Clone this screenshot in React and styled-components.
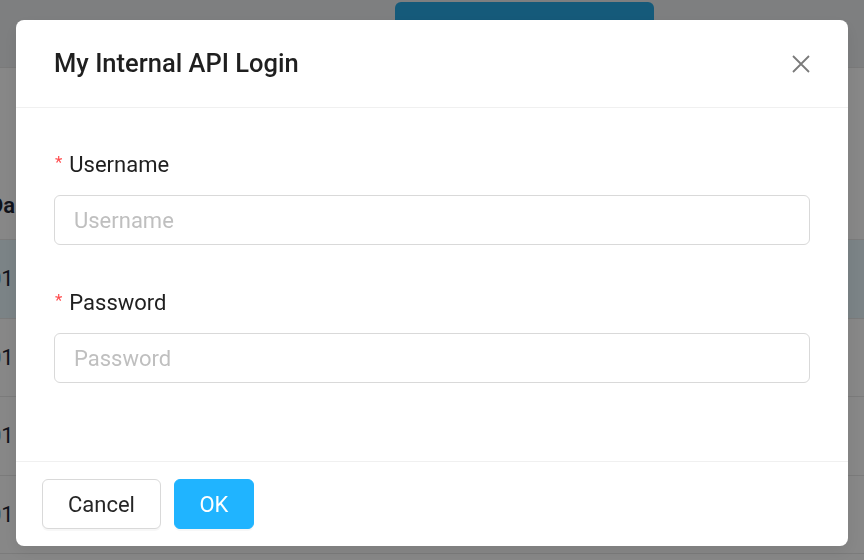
import React from "react";
import styled, { createGlobalStyle } from "styled-components";

const GlobalStyle = createGlobalStyle`
  html, body {
    margin: 0;
    padding: 0;
    background: #ffffff;
    font-family: Roboto, "Liberation Sans", Arial, sans-serif;
    overflow: hidden;
  }
  * { box-sizing: border-box; }
`;

const Page = styled.div`
  width: 864px;
  height: 560px;
  display: flex;
  flex-direction: column;
  background: #ffffff;
`;

const TopBar = styled.div`
  height: 68px;
  flex-shrink: 0;
  background: #eef0f2;
  border-bottom: 1px solid #e6e6e6;
  display: flex;
  padding: 2px 0 0 395px;
`;

const PrimaryAction = styled.div`
  width: 259px;
  height: 44px;
  border-radius: 6px;
  background: #28aae6;
`;

const Toolbar = styled.div`
  height: 172px;
  flex-shrink: 0;
  display: flex;
  align-items: flex-end;
  border-bottom: 1px solid #e8e8e8;
`;

const Row = styled.div`
  height: 78.5px;
  flex-shrink: 0;
  display: flex;
  align-items: center;
  margin-left: -11px;
  background: ${({ selected }) => (selected ? "#e8f7fd" : "#ffffff")};
  border-bottom: 1px solid #e8e8e8;
  font-size: 22px;
  color: #1d2433;
  font-weight: ${({ head }) => (head ? 600 : 400)};
`;

const HeadCell = styled(Row)`
  border-bottom: none;
  background: transparent;
  height: 68px;
`;

const Mask = styled.div`
  position: fixed;
  inset: 0;
  background: rgba(0, 0, 0, 0.47);
  padding: 20px 16px;
  display: flex;
  align-items: flex-start;
`;

const Modal = styled.div`
  width: 832px;
  height: 526px;
  background: #ffffff;
  border-radius: 8px;
  box-shadow: 0 6px 16px rgba(0, 0, 0, 0.08);
  display: flex;
  flex-direction: column;
`;

const Header = styled.div`
  height: 88px;
  flex-shrink: 0;
  padding: 0 36px 0 38px;
  display: flex;
  align-items: center;
  justify-content: space-between;
  border-bottom: 1px solid #f0f0f0;
`;

const Title = styled.div`
  font-size: 25.5px;
  font-weight: 500;
  color: #1f1f1f;
  margin-top: -1px;
`;

const CloseButton = styled.button`
  width: 22px;
  height: 22px;
  padding: 0;
  border: none;
  background: transparent;
  display: flex;
  align-items: center;
  justify-content: center;
  cursor: pointer;
`;

const Body = styled.div`
  flex: 1;
  padding: 42px 38px 0;
  display: flex;
  flex-direction: column;
  gap: 43px;
`;

const FormItem = styled.div`
  display: flex;
  flex-direction: column;
  gap: 17px;
`;

const Label = styled.label`
  height: 28px;
  display: flex;
  align-items: center;
  font-size: 22px;
  color: #1f1f1f;
`;

const Required = styled.span`
  color: #ff4d4f;
  font-size: 17px;
  margin: 0 7px 0 1px;
  align-self: flex-start;
  line-height: 24px;
`;

const Input = styled.input`
  width: 100%;
  height: 50px;
  border: 1px solid #d9d9d9;
  border-radius: 6px;
  padding: 0 19px;
  font-size: 22px;
  font-family: Roboto, "Liberation Sans", Arial, sans-serif;
  color: #1f1f1f;
  outline: none;
  &::placeholder {
    color: #bfbfbf;
  }
`;

const Footer = styled.div`
  height: 85px;
  flex-shrink: 0;
  border-top: 1px solid #f0f0f0;
  padding: 17px 26px 0;
  display: flex;
  align-items: flex-start;
  gap: 13px;
`;

const Button = styled.button`
  height: 50px;
  padding: 0 ${({ primary }) => (primary ? 24.5 : 25)}px;
  border-radius: 6px;
  font-size: 22px;
  font-family: Roboto, "Liberation Sans", Arial, sans-serif;
  cursor: pointer;
  border: 1px solid ${({ primary }) => (primary ? "#20b4ff" : "#d9d9d9")};
  background: ${({ primary }) => (primary ? "#20b4ff" : "#ffffff")};
  color: ${({ primary }) => (primary ? "#ffffff" : "#262626")};
  box-shadow: 0 2px 0 rgba(0, 0, 0, 0.03);
`;

const rows = ["01", "01", "01", "01"];

export default function App() {
  return (
    <>
      <GlobalStyle />
      <Page>
        <TopBar>
          <PrimaryAction />
        </TopBar>
        <Toolbar>
          <HeadCell head>Da</HeadCell>
        </Toolbar>
        {rows.map((r, i) => (
          <Row key={i} selected={i === 0}>
            {r}
          </Row>
        ))}
      </Page>
      <Mask>
        <Modal>
          <Header>
            <Title>My Internal API Login</Title>
            <CloseButton aria-label="Close">
              <svg width="20" height="20" viewBox="0 0 20 20">
                <path
                  d="M2 2 L18 18 M18 2 L2 18"
                  stroke="#7a7a7a"
                  strokeWidth="1.8"
                  fill="none"
                />
              </svg>
            </CloseButton>
          </Header>
          <Body>
            <FormItem>
              <Label>
                <Required>*</Required>Username
              </Label>
              <Input placeholder="Username" />
            </FormItem>
            <FormItem>
              <Label>
                <Required>*</Required>Password
              </Label>
              <Input type="password" placeholder="Password" />
            </FormItem>
          </Body>
          <Footer>
            <Button>Cancel</Button>
            <Button primary>OK</Button>
          </Footer>
        </Modal>
      </Mask>
    </>
  );
}
